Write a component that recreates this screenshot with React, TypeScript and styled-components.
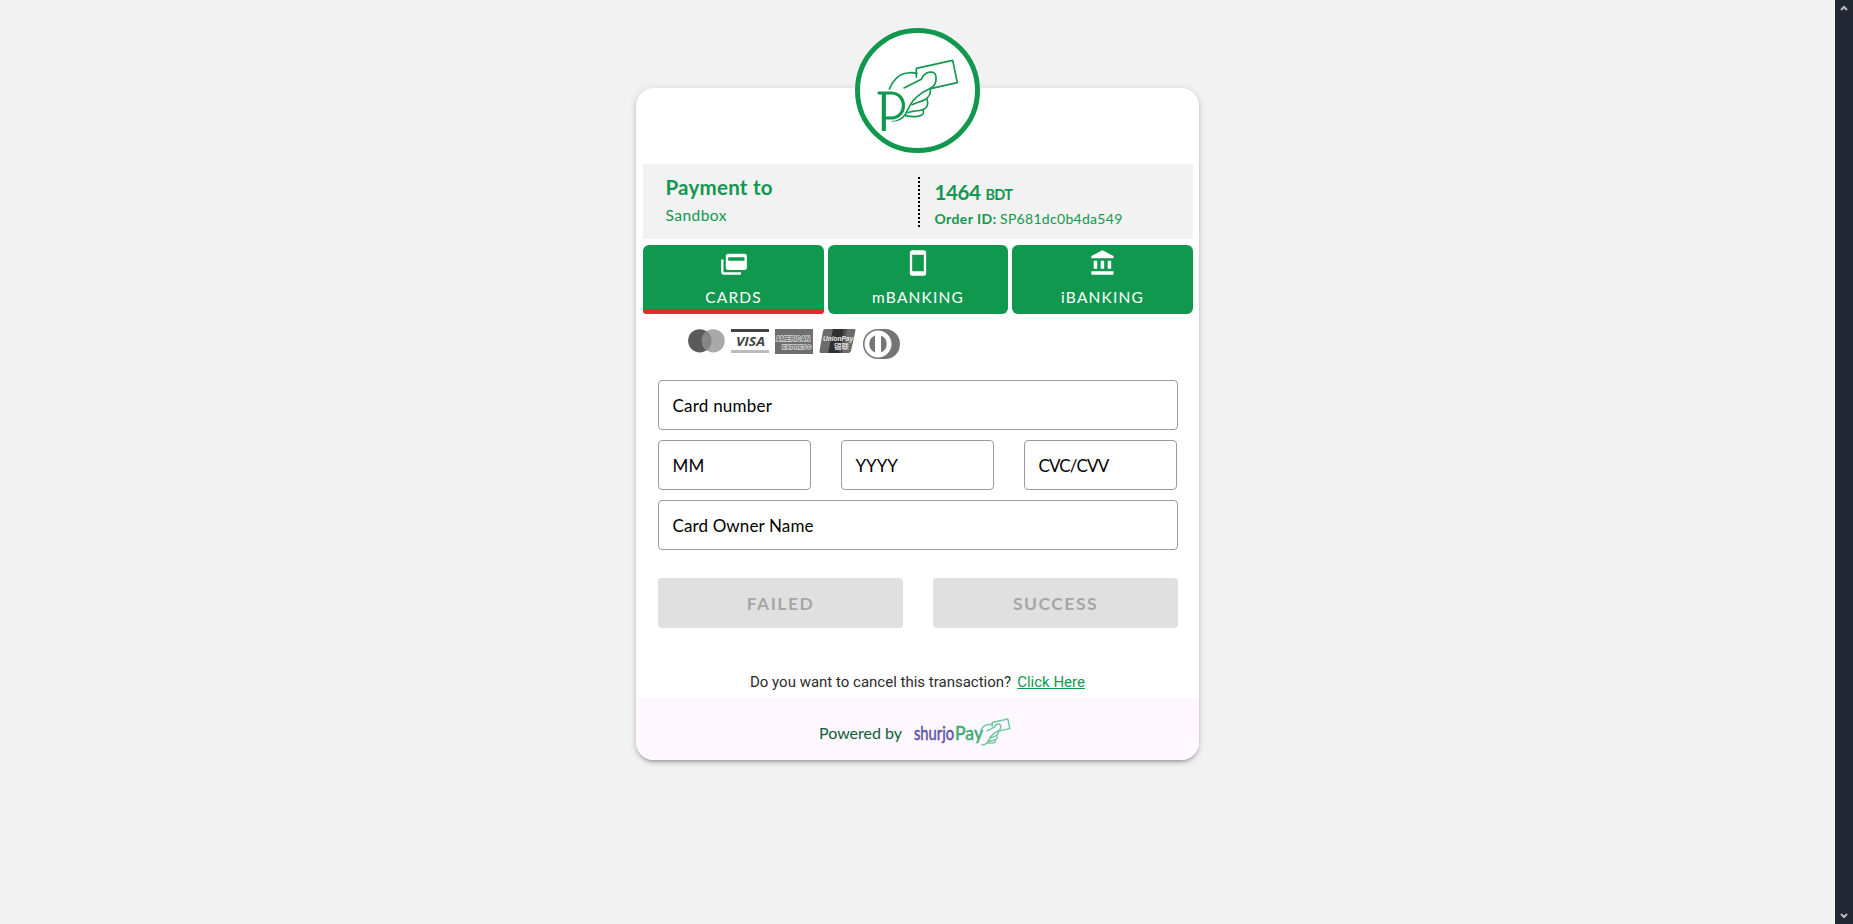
import React from "react";
import styled, { createGlobalStyle } from "styled-components";

const green = "#11984f";

const GlobalStyle = createGlobalStyle`
  *, *::before, *::after { box-sizing: border-box; }
  body { margin: 0; background: #f2f2f2; font-family: Lato, "Liberation Sans", sans-serif; overflow: hidden; }
`;

const Page = styled.div`
  display: flex;
  height: 100vh;
  min-height: 924px;
`;

const Content = styled.main`
  flex: 1;
  display: flex;
  justify-content: center;
  align-items: flex-start;
  padding-top: 88px;
`;

const ScrollTrack = styled.aside`
  width: 18px;
  background: #232733;
  display: flex;
  flex-direction: column;
  justify-content: space-between;
  align-items: center;
  padding: 4px 0;
`;

const Card = styled.section`
  position: relative;
  width: 563px;
  height: 672px;
  background: #fff;
  border-radius: 18px;
  box-shadow: 0 3px 3px -2px rgba(0, 0, 0, 0.2), 0 3px 4px 0 rgba(0, 0, 0, 0.14), 0 1px 8px 0 rgba(0, 0, 0, 0.12);
  display: flex;
  flex-direction: column;
`;

const Badge = styled.div`
  position: absolute;
  top: -60px;
  left: 219px;
  width: 125px;
  height: 125px;
  border: 5px solid ${green};
  border-radius: 50%;
  background: #fff;
  svg { display: block; }
`;

const Summary = styled.div`
  margin: 76px 6px 0 7px;
  height: 75px;
  background: #f2f2f2;
  display: flex;
  align-items: center;
  color: ${green};
`;

const Payee = styled.div`
  width: 277px;
  height: 50px;
  border-right: 2px dotted #000;
  padding-left: 22.5px;
`;

const Order = styled.div`
  height: 50px;
  padding-left: 14.5px;
`;

const Text = styled.div<{ $size: number; $line: number; $spacing?: number; $bold?: boolean; $top?: number }>`
  font-size: ${(p) => p.$size}px;
  line-height: ${(p) => p.$line}px;
  letter-spacing: ${(p) => p.$spacing ?? 0}px;
  font-weight: ${(p) => (p.$bold ? 700 : 400)};
  margin-top: ${(p) => p.$top ?? 0}px;
  white-space: pre;
`;

const Small = styled.span<{ $size: number; $spacing: number; $gap: number; $bold?: boolean }>`
  font-size: ${(p) => p.$size}px;
  letter-spacing: ${(p) => p.$spacing}px;
  margin-left: ${(p) => p.$gap}px;
  font-weight: ${(p) => (p.$bold ? 700 : 400)};
`;

const Tabs = styled.nav`
  display: grid;
  grid-template-columns: 181px 180px 181px;
  justify-content: space-between;
  margin: 6px 6px 0 7px;
`;

const Tab = styled.button<{ $active?: boolean }>`
  height: 69px;
  border: 0;
  border-bottom: ${(p) => (p.$active ? "5px solid #e12b2b" : "5px solid transparent")};
  border-radius: ${(p) => (p.$active ? "6px 6px 3px 3px" : "6px")};
  background: ${green};
  color: #fff;
  font-family: inherit;
  padding: 4px 0 0;
  display: flex;
  flex-direction: column;
  align-items: center;
  svg { display: block; }
`;

const TabLabel = styled.span<{ $spacing: number }>`
  font-size: 15.5px;
  line-height: 20px;
  margin-top: 10px;
  letter-spacing: ${(p) => p.$spacing}px;
`;

const Brands = styled.div`
  display: flex;
  align-items: flex-start;
  gap: 6px;
  height: 31px;
  margin: 15px 0 0 52px;
  svg { display: block; }
`;

const Form = styled.form`
  display: grid;
  gap: 10px;
  margin: 20px 21px 0 22px;
`;

const DateRow = styled.div`
  display: grid;
  grid-template-columns: repeat(3, 153px);
  gap: 30px;
`;

const Field = styled.label<{ $spacing: number }>`
  height: 50px;
  border: 1px solid #9b9b9b;
  border-radius: 4px;
  padding-left: 13.5px;
  font-size: 17px;
  line-height: 50px;
  letter-spacing: ${(p) => p.$spacing}px;
  color: #000;
  white-space: nowrap;
`;

const Actions = styled.div`
  display: grid;
  grid-template-columns: 245px 245px;
  gap: 30px;
  margin: 28px 0 0 22px;
`;

const Action = styled.button<{ $spacing: number }>`
  height: 50px;
  border: 0;
  border-radius: 4px;
  background: #e0e0e0;
  color: #a6a6a6;
  font: 700 17.5px/50px Lato, "Liberation Sans", sans-serif;
  letter-spacing: ${(p) => p.$spacing}px;
  padding: 1px 0 0;
`;

const Cancel = styled.p`
  margin: 42px 0 0;
  height: 28px;
  padding-left: 114px;
  display: flex;
  gap: 6px;
  font: 400 15px/24px Roboto, sans-serif;
  letter-spacing: 0;
  color: #2b2b2b;
  white-space: nowrap;
  a { color: ${green}; text-decoration: underline; }
`;

const Footer = styled.footer`
  flex: 1;
  background: #fef7ff;
  border-radius: 0 0 18px 18px;
  display: flex;
  align-items: flex-start;
  padding: 20px 0 0 183px;
  color: #0c5f38;
  svg { display: block; margin-left: auto; margin-right: 188px; }
`;

const Hand = ({ width = 3.4 }: { width?: number }) => (
  <g fill="none" stroke="currentColor" strokeWidth={width} strokeLinejoin="round" strokeLinecap="round">
    <path d="M229 172 V145 L338 121 L352 188 L272 206" />
    <path d="M148 207 C158 180 179 161 202 159 C213 157 221 158 231 161" />
    <path d="M192 204 L244 178 C250 160 266 154 279 157 C292 163 289 184 284 193 C278 204 258 211 247 218 C222 235 211 250 204 268 C196 289 179 302 157 303" />
    <path d="M271 207 C273 219 267 232 254 239 C241 246 229 248 216 254" />
    <path d="M261 237 C266 252 262 265 247 269 C233 274 215 272 204 278" />
    <path d="M250 270 C253 283 246 288 231 289 C217 291 207 289 197 287" />
  </g>
);

const PayMark = () => (
  <svg width="115" height="115" viewBox="60 39 345 345" color={green}>
    <Hand width={5} />
    <g fill="none" stroke="#fff" strokeWidth="17">
      <path d="M131 219 H151 C205 216 205 296 151 294 H131" />
    </g>
    <g fill="none" stroke={green}>
      <path strokeWidth="9.5" d="M113 219 H154 C203 221 202 293 154 294 H136" />
      <path strokeWidth="12.5" d="M131.500 219 V333" />
    </g>
  </svg>
);

const icons = {
  cards: "M21,10V7H7V10H21M21,4A2,2 0 0,1 23,6V16A2,2 0 0,1 21,18H7C5.890,18 5,17.100 5,16V6C5,4.890 5.900,4 7,4H21M3,20H18V22H3A2,2 0 0,1 1,20V9H3V20Z",
  phone: "M17,19H7V5H17M17,1H7C5.890,1 5,1.890 5,3V21A2,2 0 0,0 7,23H17A2,2 0 0,0 19,21V3C19,1.890 18.100,1 17,1Z",
  bank: "M11.500,1L2,6V8H21V6M16,10V17H19V10M2,22H21V19H2M10,10V17H13V10M4,10V17H7V10H4Z",
};

const Icon = ({ d }: { d: string }) => (
  <svg width="28" height="28" viewBox="0 0 24 24"><path d={d} fill="#fff" fillRule="evenodd" /></svg>
);

const CardBrands = () => (
  <Brands>
    <svg width="37" height="24">
      <circle cx="25.200" cy="11.800" r="11.600" fill="#a9a9a9" />
      <circle cx="11.700" cy="11.800" r="11.600" fill="#5b5b5b" />
      <path d="M18.400 2.300A11.600 11.600 0 0 1 18.400 21.300A11.600 11.600 0 0 1 18.400 2.300" fill="#868686" />
    </svg>
    <svg width="38" height="24">
      <path d="M0 0H38V3H0Z" fill="#444" />
      <path d="M0 21H38V24H0Z" fill="#bbb" />
      <text x="5" y="17" fontFamily="Open Sans" fontSize="13" fontWeight="700" fontStyle="italic" fill="#444" textLength="29" lengthAdjust="spacingAndGlyphs">VISA</text>
    </svg>
    <svg width="38" height="25">
      <path d="M0 0H38V25H0Z" fill="#6e6e6e" />
      <g fontFamily="Liberation Sans" fontWeight="700" fill="#6e6e6e" stroke="#d6d6d6" strokeWidth="1.400" paintOrder="stroke">
        <text x="1" y="12" fontSize="6.500" textLength="34" lengthAdjust="spacingAndGlyphs">AMERICAN</text>
        <text x="7" y="19.500" fontSize="6" textLength="29" lengthAdjust="spacingAndGlyphs">EXPRESS</text>
      </g>
    </svg>
    <svg width="38" height="24">
      <path d="M6 0H35Q37 0 36.400 2L32 22Q31.500 24 29.500 24H2Q0 24 .5 22L4 2Q4.400 0 6 0Z" fill="#6b6b6b" />
      <path d="M14 0H25L20 24H9Z" fill="#303030" />
      <path d="M25 0H28L23 24H20Z" fill="#4c4c4c" />
      <text x="4" y="12" fontFamily="Liberation Sans" fontSize="7.500" fontWeight="700" fontStyle="italic" fill="#eee" textLength="30" lengthAdjust="spacingAndGlyphs">UnionPay</text>
      <text x="15" y="19.500" fontFamily="Noto Sans CJK SC, sans-serif" fontSize="7" fontWeight="700" fill="#ddd" textLength="15" lengthAdjust="spacingAndGlyphs">银联</text>
    </svg>
    <svg width="38" height="31">
      <path d="M15 0H22C31 0 37 7 37 15C37 24 30 30 22 30H15C6 30 0 23 0 15S6 0 15 0Z" fill="#757575" />
      <circle cx="15" cy="15" r="13.500" fill="#fff" />
      <path d="M12 6.500V23.500A9.200 9.200 0 0 1 12 6.500M18 6.500V23.500A9.200 9.200 0 0 0 18 6.500" fill="#757575" />
    </svg>
  </Brands>
);

const ShurjoPay = () => (
  <svg width="98" height="30" viewBox="0 0 98 30">
    <g fontFamily="Lato, sans-serif" strokeWidth=".4">
      <text transform="translate(1 22) scale(1 1.300)" fontSize="14.500" fill="#5a55a8" stroke="#5a55a8" textLength="40" lengthAdjust="spacingAndGlyphs">shurjo</text>
      <text transform="translate(42 22) scale(1 1.200)" fontSize="16.500" fill="#3aab6e" stroke="#3aab6e" textLength="28" lengthAdjust="spacingAndGlyphs">Pay</text>
    </g>
    <g color="#6fc79c" transform="translate(46.500 -16.300) scale(.143)"><Hand width={10} /></g>
  </svg>
);

export default function App() {
  return (
    <Page>
      <GlobalStyle />
      <Content>
        <Card>
          <Badge><PayMark /></Badge>
          <Summary>
            <Payee>
              <Text $size={20.5} $line={24} $spacing={0.25} $bold $top={-2}>Payment to</Text>
              <Text $size={15.5} $line={20} $spacing={0.45} $top={6}>Sandbox</Text>
            </Payee>
            <Order>
              <Text $size={20.5} $line={24} $spacing={-0.4} $bold $top={3}>1464<Small $size={14.5} $spacing={-0.7} $gap={5} $bold>BDT</Small></Text>
              <Text $size={14} $line={20} $spacing={0.4} $bold $top={2}>Order ID:<Small $size={14} $spacing={0.3} $gap={3.5}>SP681dc0b4da549</Small></Text>
            </Order>
          </Summary>
          <Tabs>
            <Tab $active><Icon d={icons.cards} /><TabLabel $spacing={1.15}>CARDS</TabLabel></Tab>
            <Tab><Icon d={icons.phone} /><TabLabel $spacing={1.15}>mBANKING</TabLabel></Tab>
            <Tab><Icon d={icons.bank} /><TabLabel $spacing={1.15}>iBANKING</TabLabel></Tab>
          </Tabs>
          <CardBrands />
          <Form>
            <Field $spacing={0.22}>Card number</Field>
            <DateRow>
              <Field $spacing={0.2}>MM</Field>
              <Field $spacing={0}>YYYY</Field>
              <Field $spacing={-0.85}>CVC/CVV</Field>
            </DateRow>
            <Field $spacing={0.12}>Card Owner Name</Field>
          </Form>
          <Actions>
            <Action $spacing={1.5} disabled>FAILED</Action>
            <Action $spacing={1.5} disabled>SUCCESS</Action>
          </Actions>
          <Cancel><span>Do you want to cancel this transaction?</span><a>Click Here</a></Cancel>
          <Footer>
            <Text $size={16} $line={30}>Powered by</Text>
            <ShurjoPay />
          </Footer>
        </Card>
      </Content>
      <ScrollTrack>
        <svg width="10" height="8" viewBox="0 0 10 8"><path d="M2 6L5 3L8 6" fill="none" stroke="#bbb" strokeWidth="2" /></svg>
        <svg width="10" height="8" viewBox="0 0 10 8"><path d="M2 2L5 5L8 2" fill="none" stroke="#bbb" strokeWidth="2" /></svg>
      </ScrollTrack>
    </Page>
  );
}
